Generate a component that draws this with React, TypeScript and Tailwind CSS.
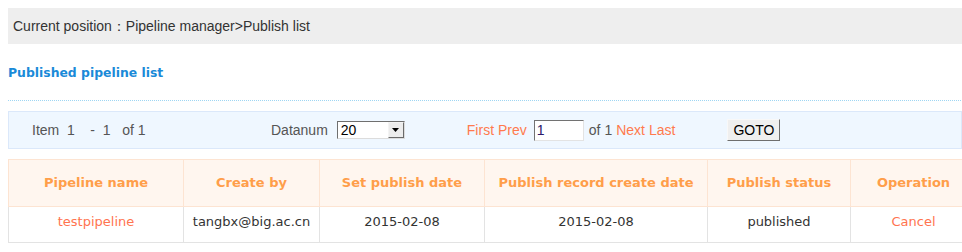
const ARIAL = "font-['Arial','Liberation_Sans',sans-serif]";
const VERDANA = "font-['Verdana','DejaVu_Sans',sans-serif]";

interface Row {
  name: string;
  createBy: string;
  setDate: string;
  recordDate: string;
  status: string;
}

// the last column runs past the window edge in the original page
const COLUMNS = [
  { label: "Pipeline name", width: "w-[175px]" },
  { label: "Create by", width: "w-[136px]" },
  { label: "Set publish date", width: "w-[165px]" },
  { label: "Publish record create date", width: "w-[223px]" },
  { label: "Publish status", width: "w-[143px]" },
  { label: "Operation", width: "w-[126px]" },
];

const ROWS: Row[] = [
  {
    name: "testpipeline",
    createBy: "tangbx@big.ac.cn",
    setDate: "2015-02-08",
    recordDate: "2015-02-08",
    status: "published",
  },
];

function Pager() {
  return (
    <div
      className={`mt-[10px] flex h-[38px] items-center border border-[#dbe8fa] bg-[#eff7ff] text-[14px] text-[#555] ${ARIAL}`}
    >
      <div className="w-[262px] pl-[23px] whitespace-pre">
        {"Item  1    -  1   of 1"}
      </div>
      <div className="flex items-center">
        <span>Datanum</span>
        <div className="ml-[9px] flex h-[18px] w-[68px] border border-t-[#6f6f6f] border-l-[#6f6f6f] border-r-[#dcdcdc] border-b-[#dcdcdc] bg-white">
          <span className="flex-1 pl-[3px] leading-[16px] text-black">20</span>
          <span className="flex w-[16px] items-center justify-center border border-t-[#f4f4f4] border-l-[#f4f4f4] border-r-[#6a6a6a] border-b-[#6a6a6a] bg-[#ececec]">
            <svg width="7" height="4" viewBox="0 0 7 4">
              <path d="M0 0h7L3.5 4z" fill="#000" />
            </svg>
          </span>
        </div>
      </div>
      <div className="ml-[62px] flex items-center">
        <a className="text-[#ff7a4d]">First</a>
        <a className="ml-[4px] text-[#ff7a4d]">Prev</a>
        <div className="ml-[7px] h-[21px] w-[50px] border border-t-[#727272] border-l-[#727272] border-r-[#e3e3e3] border-b-[#e3e3e3] bg-white pl-[2px] leading-[19px] text-[#2b1a6a]">
          1
        </div>
        <span className="ml-[5px]">of 1</span>
        <a className="ml-[4px] text-[#ff7a4d]">Next</a>
        <a className="ml-[4px] text-[#ff7a4d]">Last</a>
      </div>
      <button
        type="button"
        className="ml-[52px] h-[22px] w-[53px] border border-t-[#f8f8f8] border-l-[#f8f8f8] border-r-[#6e6e6e] border-b-[#6e6e6e] bg-[#efefef] text-[14px] leading-[18px] text-black"
      >
        GOTO
      </button>
    </div>
  );
}

export default function App() {
  return (
    <div className="w-[962px] overflow-hidden bg-white pt-2 pl-2">
      <div
        className={`flex h-[36px] items-center bg-[#eeeeee] pl-[5px] text-[14px] text-[#333] ${ARIAL}`}
      >
        Current position：Pipeline manager&gt;Publish list
      </div>

      <h2
        className={`mt-[21px] h-[15px] text-[12.4px] leading-[15px] font-bold text-[#1a8ad8] ${VERDANA}`}
      >
        Published pipeline list
      </h2>

      <div className="mt-[20px] h-px bg-[linear-gradient(to_right,#9fd6f3_50%,transparent_50%)] bg-[length:2px_1px]" />

      <Pager />

      <table
        className={`mt-[10px] w-[968px] max-w-none table-fixed border-collapse text-[13px] ${VERDANA}`}
      >
        <thead>
          <tr className="h-[47px] bg-[#fff6ef]">
            {COLUMNS.map((c) => (
              <th
                key={c.label}
                className={`${c.width} border border-[#fde4d2] text-center font-bold text-[#ff9e4a]`}
              >
                {c.label}
              </th>
            ))}
          </tr>
        </thead>
        <tbody>
          {ROWS.map((r) => (
            <tr key={r.name} className="h-[36px] text-center text-[#333]">
              <td className="border border-[#e3e3e3] pb-[6px] text-[#ff7450]">
                {r.name}
              </td>
              <td className="border border-[#e3e3e3] pb-[6px]">{r.createBy}</td>
              <td className="border border-[#e3e3e3] pb-[6px]">{r.setDate}</td>
              <td className="border border-[#e3e3e3] pb-[6px]">
                {r.recordDate}
              </td>
              <td className="border border-[#e3e3e3] pb-[6px]">{r.status}</td>
              <td className="border border-[#e3e3e3] pb-[6px] text-[#ff7450]">
                Cancel
              </td>
            </tr>
          ))}
        </tbody>
      </table>
      <div className="h-[10px]" />
    </div>
  );
}
